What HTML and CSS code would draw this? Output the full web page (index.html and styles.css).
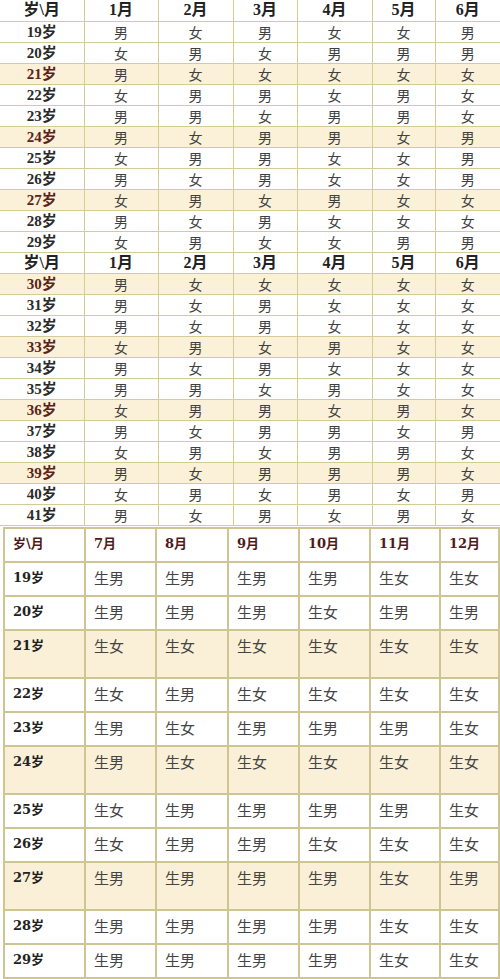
FILE: index.html
```html
<!DOCTYPE html>
<html lang="zh">
<head>
<meta charset="utf-8">
<title>生男生女表</title>
<link rel="stylesheet" href="styles.css">
</head>
<body>
<table class="grid">
  <colgroup><col class="c0"><col class="c1"><col class="c2"><col class="c3"><col class="c4"><col class="c5"><col class="c6"></colgroup>
  <tr class="head"><th>岁\月</th><th>1月</th><th>2月</th><th>3月</th><th>4月</th><th>5月</th><th>6月</th></tr>
  <tr><th>19岁</th><td>男</td><td>女</td><td>男</td><td>女</td><td>女</td><td>男</td></tr>
  <tr><th>20岁</th><td>女</td><td>男</td><td>女</td><td>男</td><td>男</td><td>男</td></tr>
  <tr class="hl"><th>21岁</th><td>男</td><td>女</td><td>女</td><td>女</td><td>女</td><td>女</td></tr>
  <tr><th>22岁</th><td>女</td><td>男</td><td>男</td><td>女</td><td>男</td><td>女</td></tr>
  <tr><th>23岁</th><td>男</td><td>男</td><td>女</td><td>男</td><td>男</td><td>女</td></tr>
  <tr class="hl"><th>24岁</th><td>男</td><td>女</td><td>男</td><td>男</td><td>女</td><td>男</td></tr>
  <tr><th>25岁</th><td>女</td><td>男</td><td>男</td><td>女</td><td>女</td><td>男</td></tr>
  <tr><th>26岁</th><td>男</td><td>女</td><td>男</td><td>女</td><td>女</td><td>男</td></tr>
  <tr class="hl"><th>27岁</th><td>女</td><td>男</td><td>女</td><td>男</td><td>女</td><td>女</td></tr>
  <tr><th>28岁</th><td>男</td><td>女</td><td>男</td><td>女</td><td>女</td><td>女</td></tr>
  <tr><th>29岁</th><td>女</td><td>男</td><td>女</td><td>女</td><td>男</td><td>男</td></tr>
  <tr class="head"><th>岁\月</th><th>1月</th><th>2月</th><th>3月</th><th>4月</th><th>5月</th><th>6月</th></tr>
  <tr class="hl"><th>30岁</th><td>男</td><td>女</td><td>女</td><td>女</td><td>女</td><td>女</td></tr>
  <tr><th>31岁</th><td>男</td><td>女</td><td>男</td><td>女</td><td>女</td><td>女</td></tr>
  <tr><th>32岁</th><td>男</td><td>女</td><td>男</td><td>女</td><td>女</td><td>女</td></tr>
  <tr class="hl"><th>33岁</th><td>女</td><td>男</td><td>女</td><td>男</td><td>女</td><td>女</td></tr>
  <tr><th>34岁</th><td>男</td><td>女</td><td>男</td><td>女</td><td>女</td><td>女</td></tr>
  <tr><th>35岁</th><td>男</td><td>男</td><td>女</td><td>男</td><td>女</td><td>女</td></tr>
  <tr class="hl"><th>36岁</th><td>女</td><td>男</td><td>男</td><td>女</td><td>男</td><td>女</td></tr>
  <tr><th>37岁</th><td>男</td><td>女</td><td>男</td><td>男</td><td>女</td><td>男</td></tr>
  <tr><th>38岁</th><td>女</td><td>男</td><td>女</td><td>男</td><td>男</td><td>女</td></tr>
  <tr class="hl"><th>39岁</th><td>男</td><td>女</td><td>男</td><td>男</td><td>男</td><td>女</td></tr>
  <tr><th>40岁</th><td>女</td><td>男</td><td>女</td><td>男</td><td>女</td><td>男</td></tr>
  <tr><th>41岁</th><td>男</td><td>女</td><td>男</td><td>女</td><td>男</td><td>女</td></tr>
</table>

<table class="grid2">
  <colgroup><col class="d0"><col class="d1"><col class="d2"><col class="d3"><col class="d4"><col class="d5"><col class="d6"></colgroup>
  <tr class="head"><th>岁\月</th><th>7月</th><th>8月</th><th>9月</th><th>10月</th><th>11月</th><th>12月</th></tr>
  <tr><th>19岁</th><td>生男</td><td>生男</td><td>生男</td><td>生男</td><td>生女</td><td>生女</td></tr>
  <tr><th>20岁</th><td>生男</td><td>生男</td><td>生男</td><td>生女</td><td>生男</td><td>生男</td></tr>
  <tr class="hl"><th>21岁</th><td>生女</td><td>生女</td><td>生女</td><td>生女</td><td>生女</td><td>生女</td></tr>
  <tr><th>22岁</th><td>生女</td><td>生男</td><td>生女</td><td>生女</td><td>生女</td><td>生女</td></tr>
  <tr><th>23岁</th><td>生男</td><td>生女</td><td>生男</td><td>生男</td><td>生男</td><td>生女</td></tr>
  <tr class="hl"><th>24岁</th><td>生男</td><td>生女</td><td>生女</td><td>生女</td><td>生女</td><td>生女</td></tr>
  <tr><th>25岁</th><td>生女</td><td>生男</td><td>生男</td><td>生男</td><td>生男</td><td>生女</td></tr>
  <tr><th>26岁</th><td>生女</td><td>生男</td><td>生男</td><td>生女</td><td>生女</td><td>生女</td></tr>
  <tr class="hl"><th>27岁</th><td>生男</td><td>生男</td><td>生男</td><td>生男</td><td>生女</td><td>生男</td></tr>
  <tr><th>28岁</th><td>生男</td><td>生男</td><td>生男</td><td>生男</td><td>生女</td><td>生女</td></tr>
  <tr><th>29岁</th><td>生男</td><td>生男</td><td>生男</td><td>生男</td><td>生女</td><td>生女</td></tr>
</table>
</body>
</html>
```

FILE: styles.css
```css
html, body {
  margin: 0;
  padding: 0;
  background: #ffffff;
}

body {
  width: 500px;
  font-family: "Noto Sans CJK SC", "Noto Sans", sans-serif;
  color: #333333;
}

/* ---------- upper table (1-6 月) ---------- */
.grid {
  width: 500px;
  table-layout: fixed;
  border-collapse: collapse;
}

.grid .c0 { width: 84px; }
.grid .c1 { width: 74px; }
.grid .c2 { width: 75px; }
.grid .c3 { width: 64px; }
.grid .c4 { width: 75px; }
.grid .c5 { width: 63px; }
.grid .c6 { width: 65px; }

.grid tr { height: 21px; }

.grid th,
.grid td {
  padding: 0;
  height: 20px;
  line-height: 20px;
  text-align: center;
  vertical-align: middle;
  border: 1px solid #d3cc94;
  font-size: 14px;
}

.grid tr > :first-child { border-left: none; }
.grid tr > :last-child { border-right: none; }
.grid tr:first-child > * { border-top: none; }

.grid td {
  color: #404040;
  font-weight: 400;
}

.grid th {
  font-family: "Liberation Serif", "Noto Sans CJK SC", serif;
  font-weight: 700;
  font-size: 15px;
  color: #2b2b2b;
}

.grid .head th {
  font-size: 16px;
  color: #222222;
}

.grid .hl > * { background: #fbf0d8; }
.grid .hl th { color: #5c2418; }

/* ---------- lower table (7-12 月) ---------- */
.grid2 {
  width: 495px;
  margin: 1px 0 0 3px;
  table-layout: fixed;
  border-collapse: collapse;
}

.grid2 .d0 { width: 81px; }
.grid2 .d1 { width: 71px; }
.grid2 .d2 { width: 72px; }
.grid2 .d3 { width: 71px; }
.grid2 .d4 { width: 71px; }
.grid2 .d5 { width: 70px; }
.grid2 .d6 { width: 59px; }

.grid2 tr { height: 34px; }
.grid2 tr.hl { height: 48px; }

.grid2 th,
.grid2 td {
  padding: 6px 0 0 8px;
  line-height: 18px;
  text-align: left;
  vertical-align: top;
  border: 2px solid #cfc593;
  font-size: 15px;
}

.grid2 td {
  color: #444444;
  font-weight: 400;
}

.grid2 th {
  font-family: "DejaVu Serif", "Noto Sans CJK SC", serif;
  font-weight: 700;
  font-size: 13px;
  color: #222222;
}

.grid2 .head th {
  color: #4e1a1a;
}

.grid2 .hl > * { background: #faefd7; }
```
